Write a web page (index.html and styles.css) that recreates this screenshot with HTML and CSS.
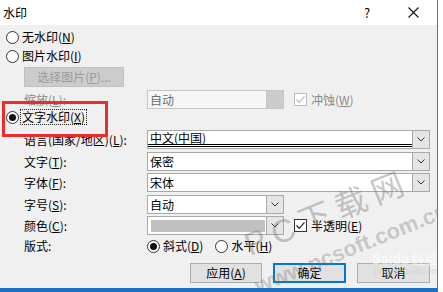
FILE: index.html
```html
<!DOCTYPE html>
<html lang="zh-CN">
<head>
<meta charset="utf-8">
<title>水印</title>
<link rel="stylesheet" href="styles.css">
</head>
<body>
<div class="win">
  <div class="titlebar">
    <span class="title">水印</span>
    <span class="help">?</span>
    <span class="close"><svg width="11" height="11" viewBox="0 0 11 11"><path d="M0.5 0.5 L10.5 10.5 M10.5 0.5 L0.5 10.5" stroke="#111" stroke-width="1.1" fill="none"/></svg></span>
  </div>
  <div class="body">
    <div class="opt r1"><span class="radio"></span><span>无水印(<u>N</u>)</span></div>
    <div class="opt r2"><span class="radio"></span><span>图片水印(<u>I</u>)</span></div>
    <div class="picrow"><span class="btn disabled">选择图片(<u>P</u>)...</span></div>
    <div class="row r-scale">
      <span class="lbl dis">缩放(<u>L</u>):</span>
      <div class="ctrls">
        <div class="combo short disabled"><span class="val">自动</span><span class="dd"><svg width="8" height="5" viewBox="0 0 8 5"><polyline points="0.5,0.5 4,4 7.5,0.5" fill="none" stroke="#c8c8c8" stroke-width="1"/></svg></span></div>
        <span class="chk dis"><span class="box"><svg width="11" height="11" viewBox="0 0 11 11"><polyline points="1.5,5.5 4.2,8.3 9.5,2.3" fill="none" stroke="#bdbdbd" stroke-width="1.2"/></svg></span><span class="ctext">冲蚀(<u>W</u>)</span></span>
      </div>
    </div>
    <div class="opt r5"><span class="radio on"></span><span class="focus">文字水印(<u>X</u>)</span></div>
    <div class="row r-lang">
      <span class="lbl">语言(国家/地区)(<u>L</u>):</span>
      <div class="combo full"><span class="val lang">中文(中国)</span><span class="dd"><svg width="8" height="5" viewBox="0 0 8 5"><polyline points="0.5,0.5 4,4 7.5,0.5" fill="none" stroke="#333" stroke-width="1"/></svg></span></div>
    </div>
    <div class="row r-text">
      <span class="lbl">文字(<u>T</u>):</span>
      <div class="combo full"><span class="val">保密</span><span class="dd"><svg width="8" height="5" viewBox="0 0 8 5"><polyline points="0.5,0.5 4,4 7.5,0.5" fill="none" stroke="#333" stroke-width="1"/></svg></span></div>
    </div>
    <div class="row r-font">
      <span class="lbl">字体(<u>F</u>):</span>
      <div class="combo full"><span class="val">宋体</span><span class="dd"><svg width="8" height="5" viewBox="0 0 8 5"><polyline points="0.5,0.5 4,4 7.5,0.5" fill="none" stroke="#333" stroke-width="1"/></svg></span></div>
    </div>
    <div class="row r-size">
      <span class="lbl">字号(<u>S</u>):</span>
      <div class="combo short"><span class="val">自动</span><span class="dd"><svg width="8" height="5" viewBox="0 0 8 5"><polyline points="0.5,0.5 4,4 7.5,0.5" fill="none" stroke="#333" stroke-width="1"/></svg></span></div>
    </div>
    <div class="row r-color">
      <span class="lbl">颜色(<u>C</u>):</span>
      <div class="ctrls">
        <div class="combo short"><span class="val"><span class="swatch"></span></span><span class="dd"><svg width="8" height="5" viewBox="0 0 8 5"><polyline points="0.5,0.5 4,4 7.5,0.5" fill="none" stroke="#333" stroke-width="1"/></svg></span></div>
        <span class="chk"><span class="box"><svg width="11" height="11" viewBox="0 0 11 11"><polyline points="1.5,5.5 4.2,8.3 9.5,2.3" fill="none" stroke="#222" stroke-width="1.2"/></svg></span><span class="ctext">半透明(<u>E</u>)</span></span>
      </div>
    </div>
    <div class="row r-layout">
      <span class="lbl">版式:</span>
      <div class="ctrls radios">
        <span class="ropt"><span class="radio on"></span><span>斜式(<u>D</u>)</span></span>
        <span class="ropt second"><span class="radio"></span><span>水平(<u>H</u>)</span></span>
      </div>
    </div>
    <div class="buttons">
      <span class="btn">应用(<u>A</u>)</span>
      <span class="btn default">确定</span>
      <span class="btn">取消</span>
    </div>
  </div>
  <div class="annot"></div>
  <div class="wm-big">PC下载网</div>
  <div class="wm-url">www.pcsoft.com.cn</div>
  <div class="wm-baidu"><span class="bai">Bai</span><span class="du">du</span> 经验<div class="jy">jingyan.baidu.com</div></div>
</div>
</body>
</html>
```

FILE: styles.css
```css
* { box-sizing: border-box; }
html, body { margin: 0; padding: 0; background: #ffffff; }
body {
  width: 443px;
  height: 292px;
  overflow: hidden;
  font-family: "Noto Sans CJK SC", "Liberation Sans", sans-serif;
  font-size: 12px;
  color: #000;
}
u { text-decoration: underline; text-underline-offset: 1px; }

.win {
  position: relative;
  width: 438px;
  height: 292px;
  border-right: 1px solid #2a7fd4;
  border-bottom: 4px solid #1f6fc4;
  background: #f0f0f0;
  overflow: hidden;
}

.titlebar {
  height: 25px;
  background: #fff;
  display: flex;
  align-items: center;
  padding-left: 3px;
}
.title { font-size: 12px; line-height: 14px; flex: 1; }
.help { width: 14px; text-align: center; font-size: 13px; margin-right: 34px; }
.close { width: 11px; height: 11px; display: flex; margin-right: 18px; }

.body {
  height: 263px;
  display: flex;
  flex-direction: column;
  padding-left: 6px;
  padding-right: 7px;
}

.opt { display: flex; align-items: center; height: 14px; gap: 3px; line-height: 14px; }
.r1 { margin-top: 5px; }
.r2 { margin-top: 5px; }
.r5 { margin-top: 1px; }

.radio {
  width: 13px; height: 13px; border-radius: 50%;
  border: 1px solid #333; background: #fff;
  display: inline-flex; align-items: center; justify-content: center;
  flex: none;
}
.radio.on::after {
  content: ""; width: 7px; height: 7px; border-radius: 50%; background: #111;
}
.focus { outline: 1px dotted #222; outline-offset: 0; padding: 0 1px; margin-left: -1px; }

.picrow { margin-top: 4px; padding-left: 18px; height: 20px; display: flex; }
.btn {
  display: inline-flex; align-items: center; justify-content: center;
  height: 20px; border: 1px solid #adadad; background: #e1e1e1;
  line-height: 14px;
}
.btn.disabled { width: 100px; background: #cccccc; border-color: #bfbfbf; color: #9b9b9b; }

.row { display: flex; align-items: center; height: 19px; padding-left: 18px; }
.lbl { width: 123px; flex: none; line-height: 14px; }
.lbl.dis { color: #8a8a8a; }
.r-scale { margin-top: 3px; }
.r-lang { margin-top: 6px; }
.r-text { margin-top: 3px; }
.r-font { margin-top: 2px; }
.r-size { margin-top: 3px; }
.r-color { margin-top: 2px; }
.r-layout { margin-top: 4px; height: 14px; }

.ctrls { display: flex; align-items: center; }

.combo {
  display: flex; height: 19px;
  border: 1px solid #a9a9a9; background: #fff;
}
.combo.full { width: 283px; }
.combo.short { width: 137px; }
.combo .val { flex: 1; padding-left: 2px; line-height: 16px; display: flex; align-items: center; }
.combo .dd {
  width: 17px; flex: none; background: #e5e5e5; border-left: 1px solid #a9a9a9;
  display: flex; align-items: center; justify-content: center;
}
.combo.disabled { background: #f7f7f7; border-color: #c6c6c6; color: #6d6d6d; }
.combo.disabled .dd { background: #cccccc; border-left-color: #c6c6c6; }
.val.lang { border-bottom: 3px double #000; margin-bottom: 1px; line-height: 13px; }

.swatch { display: block; width: 114px; height: 12px; background: #c0c0c0; margin-left: 1px; }

.chk { display: inline-flex; align-items: center; margin-left: 10px; gap: 4px; }
.box {
  width: 13px; height: 13px; border: 1px solid #333; background: #fff;
  display: inline-flex; align-items: center; justify-content: center;
}
.chk.dis .box { border-color: #bcbcbc; }
.chk.dis .ctext { color: #8a8a8a; }
.ctext { line-height: 14px; }

.radios { height: 14px; }
.ropt { display: inline-flex; align-items: center; gap: 3px; line-height: 14px; }
.ropt.second { margin-left: 12px; }

.buttons { margin-top: 10px; display: flex; justify-content: flex-end; gap: 11px; }
.buttons .btn { width: 73px; }
.buttons .btn:first-child { width: 72px; }
.btn.default { border: 2px solid #0078d7; }

.annot {
  position: absolute; left: 2px; top: 101px; width: 106px; height: 36px;
  border: 3px solid #ec2d2d;
}

.wm-big {
  position: absolute; left: 246px; top: 226px;
  font-family: "Liberation Sans", "Noto Sans CJK SC", sans-serif;
  font-size: 32px; letter-spacing: 7px; line-height: 40px;
  color: rgba(120, 120, 120, 0.42);
  transform: rotate(-22deg); transform-origin: left center;
  white-space: nowrap; pointer-events: none;
}
.wm-url {
  position: absolute; left: 256px; top: 276px;
  font-family: "Liberation Sans", sans-serif; font-weight: bold;
  font-size: 22px; line-height: 22px;
  color: rgba(110, 110, 110, 0.33);
  transform: rotate(-22deg); transform-origin: left center;
  white-space: nowrap; pointer-events: none;
}
.wm-baidu {
  position: absolute; left: 372px; top: 252px;
  font-size: 13px; line-height: 14px; font-weight: bold;
  color: rgba(255, 255, 255, 0.55);
  white-space: nowrap; pointer-events: none;
}
.wm-baidu .jy { font-size: 8px; font-weight: normal; line-height: 10px; margin-left: 2px; color: rgba(200, 200, 200, 0.6); }
```
